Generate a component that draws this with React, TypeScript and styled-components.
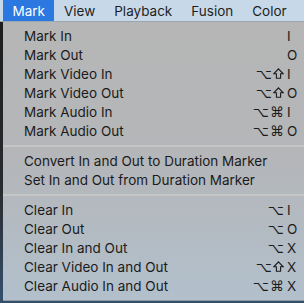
import React from 'react';
import styled, { createGlobalStyle } from 'styled-components';

type Item = { label: string; mods?: string; key?: string };
type Group = Item[];

const groups: Group[] = [
  [
    { label: 'Mark In', key: 'I' },
    { label: 'Mark Out', key: 'O' },
    { label: 'Mark Video In', mods: '⌥⇧', key: 'I' },
    { label: 'Mark Video Out', mods: '⌥⇧', key: 'O' },
    { label: 'Mark Audio In', mods: '⌥⌘', key: 'I' },
    { label: 'Mark Audio Out', mods: '⌥⌘', key: 'O' },
  ],
  [
    { label: 'Convert In and Out to Duration Marker' },
    { label: 'Set In and Out from Duration Marker' },
  ],
  [
    { label: 'Clear In', mods: '⌥', key: 'I' },
    { label: 'Clear Out', mods: '⌥', key: 'O' },
    { label: 'Clear In and Out', mods: '⌥', key: 'X' },
    { label: 'Clear Video In and Out', mods: '⌥⇧', key: 'X' },
    { label: 'Clear Audio In and Out', mods: '⌥⌘', key: 'X' },
  ],
];

const titles = ['Mark', 'View', 'Playback', 'Fusion', 'Color'];

const GlobalStyle = createGlobalStyle`
  html, body {
    margin: 0;
    padding: 0;
    width: 304px;
    height: 303px;
    overflow: hidden;
  }
  body {
    font-family: Inter, "Liberation Sans", sans-serif;
    background: #c9d6e2;
  }
`;

const Screen = styled.div`
  width: 304px;
  height: 303px;
  display: flex;
  flex-direction: column;
`;

const MenuBar = styled.div`
  height: 21px;
  display: flex;
  align-items: stretch;
  padding-left: 3px;
  background: #c7d9e9;
  border-bottom: 1px solid #9aa6b0;
`;

const Title = styled.div<{ $active?: boolean }>`
  display: flex;
  align-items: center;
  padding: 0 9.5px;
  font-size: 13.5px;
  color: ${p => (p.$active ? '#ffffff' : '#1e1e1e')};
  background: ${p => (p.$active ? '#2a78e0' : 'transparent')};
`;

const Desk = styled.div`
  flex: 1;
  display: flex;
  background: linear-gradient(#1d1d1f 0%, #2a2b2e 60%, #34506e 100%);
  padding-bottom: 2px;
`;

const Panel = styled.div`
  flex: 1;
  margin-left: 3px;
  padding: 4px 0 5px;
  background: linear-gradient(#b6b6b6 0%, #b4b6b9 50%, #b2c0cc 100%);
  border-bottom: 1px solid #8e9aa6;
  display: flex;
  flex-direction: column;
`;

const Row = styled.div`
  height: 19px;
  display: flex;
  align-items: center;
  padding: 0 7px 0 21px;
  font-size: 13.5px;
  color: #1b1b1b;
`;

const Label = styled.span`
  flex: 1;
  white-space: nowrap;
`;

const Mods = styled.span`
  display: flex;
  align-items: center;
  gap: 1px;
  font-family: "DejaVu Sans", sans-serif;
  font-size: 14px;
  padding-right: 3px;
`;

const Key = styled.span`
  width: 10px;
`;

const Separator = styled.div`
  height: 11px;
  display: flex;
  align-items: center;
  &::after {
    content: '';
    flex: 1;
    height: 2px;
    background: #c6c6c6;
  }
`;

const ShiftIcon = () => (
  <svg width="11" height="11" viewBox="0 0 11 11" fill="none" stroke="#1b1b1b" strokeWidth="1.1" strokeLinejoin="miter">
    <path d="M5.5 0.8 L10.2 5.8 H7.6 V10.2 H3.4 V5.8 H0.8 Z" />
  </svg>
);

const ModGlyphs = ({ mods }: { mods: string }) => (
  <Mods>
    {Array.from(mods).map((m, i) =>
      m === '⇧' ? <ShiftIcon key={i} /> : <span key={i}>{m}</span>
    )}
  </Mods>
);

export default function App() {
  return (
    <Screen>
      <GlobalStyle />
      <MenuBar>
        {titles.map((t, i) => (
          <Title key={t} $active={i === 0}>
            {t}
          </Title>
        ))}
      </MenuBar>
      <Desk>
        <Panel>
          {groups.map((g, gi) => (
            <React.Fragment key={gi}>
              {gi > 0 && <Separator />}
              {g.map(item => (
                <Row key={item.label}>
                  <Label>{item.label}</Label>
                  {item.mods && <ModGlyphs mods={item.mods} />}
                  {item.key && <Key>{item.key}</Key>}
                </Row>
              ))}
            </React.Fragment>
          ))}
        </Panel>
      </Desk>
    </Screen>
  );
}
